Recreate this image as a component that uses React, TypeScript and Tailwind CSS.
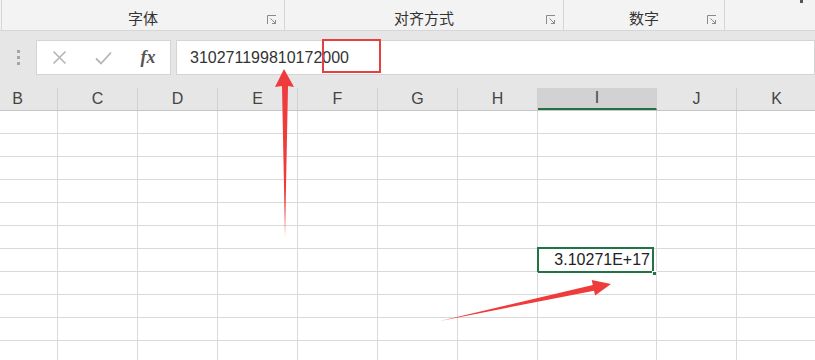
import React from 'react';

const cols = [
  { name: 'B', w: 80 },
  { name: 'C', w: 80 },
  { name: 'D', w: 80 },
  { name: 'E', w: 80 },
  { name: 'F', w: 80 },
  { name: 'G', w: 80 },
  { name: 'H', w: 80 },
  { name: 'I', w: 119 },
  { name: 'J', w: 80 },
  { name: 'K', w: 80 },
];

const ROWS = 11;
const ACTIVE_ROW = 6;

function Launcher() {
  return (
    <svg width="10" height="10" viewBox="0 0 10 10" className="text-[#8a8a8a]">
      <path d="M0.5 9V0.5H9" fill="none" stroke="currentColor" strokeWidth="1" />
      <path d="M3.5 3.5L8.5 8.5M8.5 5V8.5H5" fill="none" stroke="currentColor" strokeWidth="1" />
    </svg>
  );
}

function RibbonGroup({ label, width }: { label: string; width: string }) {
  return (
    <div className={`${width} h-full relative flex items-end justify-center pb-[4px] border-r border-[#d6d6d6]`}>
      <span className="text-[15px] leading-none text-[#333]">{label}</span>
      <div className="absolute right-[7px] bottom-[5px]">
        <Launcher />
      </div>
    </div>
  );
}

function Arrows() {
  return (
    <svg className="absolute inset-0 pointer-events-none" width="815" height="360" viewBox="0 0 815 360">
      <polygon points="284,69 275,87 282,86 285,237 288,86 294,87" fill="#ef3b3b" />
      <polygon points="611,284 591.7,280 592.8,284.9 440,321 594,290.7 595.1,295.6" fill="#ef3b3b" />
    </svg>
  );
}

export default function App() {
  return (
    <div
      className="relative w-[815px] h-[360px] overflow-hidden bg-white"
      style={{ fontFamily: '"Liberation Sans", "Noto Sans CJK SC", sans-serif' }}
    >
      {/* ribbon group labels */}
      <div className="h-[31px] bg-[#f3f3f3] border-b border-[#d6d6d6] flex">
        <div className="w-[2px] h-full border-r border-[#d6d6d6]" />
        <RibbonGroup label="字体" width="w-[283px]" />
        <RibbonGroup label="对齐方式" width="w-[279px]" />
        <RibbonGroup label="数字" width="w-[161px]" />
        <div className="flex-1 relative">
          <div className="absolute right-[12px] top-0 w-[3px] h-[3px] bg-[#555]" />
        </div>
      </div>

      {/* formula bar */}
      <div className="h-[57px] bg-[#e6e6e6] flex items-start pt-[9px]">
        <div className="w-[36px] h-[35px] flex items-center justify-center">
          <div className="flex flex-col gap-[3px]">
            <div className="w-[3px] h-[3px] bg-[#a5a5a5]" />
            <div className="w-[3px] h-[3px] bg-[#a5a5a5]" />
            <div className="w-[3px] h-[3px] bg-[#a5a5a5]" />
          </div>
        </div>
        <div className="w-[135px] h-[35px] bg-white border border-[#d4d4d4] flex items-center">
          <div className="w-[44px] flex justify-center">
            <svg width="15" height="15" viewBox="0 0 15 15">
              <path d="M1.5 1.5L13.5 13.5M13.5 1.5L1.5 13.5" stroke="#b5b5b5" strokeWidth="1.6" />
            </svg>
          </div>
          <div className="w-[45px] flex justify-center">
            <svg width="17" height="14" viewBox="0 0 17 14">
              <path d="M1 7.5L6 12.5L16 1.5" fill="none" stroke="#b5b5b5" strokeWidth="1.8" />
            </svg>
          </div>
          <div className="w-[44px] flex justify-center">
            <span
              className="italic text-[18px] text-[#555] font-bold"
              style={{ fontFamily: '"Liberation Serif", serif' }}
            >
              fx
            </span>
          </div>
        </div>
        <div className="ml-[5px] flex-1 h-[35px] bg-white border border-[#d4d4d4] flex items-center pl-[13px]">
          <span className="text-[16px] text-[#333]">310271199810172000</span>
        </div>
      </div>

      {/* column headers */}
      <div className="h-[23px] bg-[#e6e6e6] border-b border-[#c6c6c6] flex ml-[-22px]">
        {cols.map((c) => (
          <div
            key={c.name}
            style={{ width: c.w }}
            className={`shrink-0 h-full flex items-center justify-center text-[16px] text-[#444] border-r border-[#d0d0d0] ${
              c.name === 'I' ? 'bg-[#d2d2d2] border-b-2 border-b-[#217346]' : ''
            }`}
          >
            {c.name}
          </div>
        ))}
      </div>

      {/* grid */}
      <div className="ml-[-22px]">
        {Array.from({ length: ROWS }).map((_, r) => (
          <div key={r} className="flex h-[23px]">
            {cols.map((c) => {
              const active = r === ACTIVE_ROW && c.name === 'I';
              return (
                <div
                  key={c.name}
                  style={{ width: c.w }}
                  className="shrink-0 h-full border-r border-b border-[#d9d9d9] relative"
                >
                  {active && (
                    <div className="absolute left-[-1px] top-[-2px] right-[2px] bottom-[-2px] border-2 border-[#217346] flex items-center justify-end pr-[2px]">
                      <span className="text-[16px] text-[#222]">3.10271E+17</span>
                      <div className="absolute right-[-5px] bottom-[-5px] w-[5px] h-[5px] bg-[#217346] border border-white" />
                    </div>
                  )}
                </div>
              );
            })}
          </div>
        ))}
      </div>

      {/* red highlight box over the trailing digits */}
      <div className="absolute left-[322px] top-[39px] w-[59px] h-[34px] border-2 border-[#e53f3f]" />

      <Arrows />
    </div>
  );
}
